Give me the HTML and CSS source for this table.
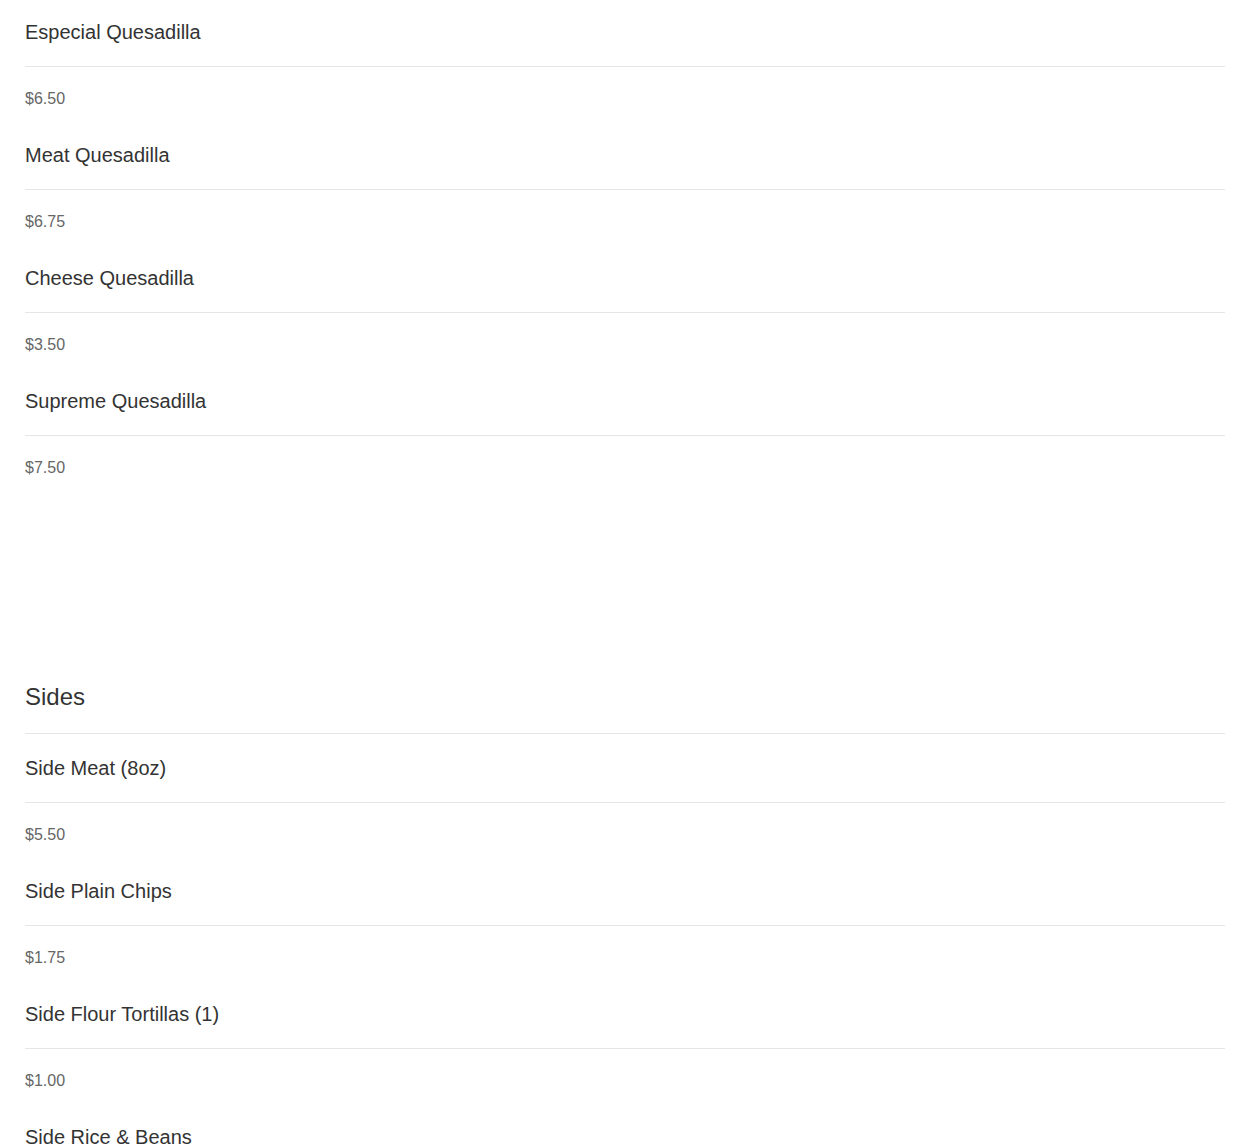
FILE: index.html
```html
<!DOCTYPE html>
<html lang="en">
<head>
<meta charset="utf-8">
<title>Menu</title>
<link rel="stylesheet" href="styles.css">
</head>
<body>
<main class="menu">
  <section class="section">
    <div class="item">
      <h3 class="item-name">Especial Quesadilla</h3>
      <p class="item-price">$6.50</p>
    </div>
    <div class="item">
      <h3 class="item-name">Meat Quesadilla</h3>
      <p class="item-price">$6.75</p>
    </div>
    <div class="item">
      <h3 class="item-name">Cheese Quesadilla</h3>
      <p class="item-price">$3.50</p>
    </div>
    <div class="item">
      <h3 class="item-name">Supreme Quesadilla</h3>
      <p class="item-price">$7.50</p>
    </div>
  </section>
  <section class="section section-spaced">
    <h2 class="section-title">Sides</h2>
    <div class="item">
      <h3 class="item-name">Side Meat (8oz)</h3>
      <p class="item-price">$5.50</p>
    </div>
    <div class="item">
      <h3 class="item-name">Side Plain Chips</h3>
      <p class="item-price">$1.75</p>
    </div>
    <div class="item">
      <h3 class="item-name">Side Flour Tortillas (1)</h3>
      <p class="item-price">$1.00</p>
    </div>
    <div class="item">
      <h3 class="item-name">Side Rice &amp; Beans</h3>
    </div>
  </section>
</main>
</body>
</html>
```

FILE: styles.css
```css
html, body {
  margin: 0;
  padding: 0;
  background: #ffffff;
}

body {
  font-family: "Liberation Sans", Arial, sans-serif;
  color: #333333;
}

.menu {
  padding: 0 25px;
}

.section-spaced {
  margin-top: 190px;
}

.section-title {
  margin: 0 0 2px;
  padding: 0 0 22px;
  font-size: 24px;
  line-height: 29px;
  font-weight: normal;
  color: #333333;
  border-bottom: 1px solid #e6e6e6;
}

.item {
  height: 123px;
}

.item-name {
  margin: 0;
  padding: 20px 0 22px;
  font-size: 20px;
  line-height: 24px;
  font-weight: normal;
  color: #333333;
  border-bottom: 1px solid #e6e6e6;
}

.item-price {
  margin: 0;
  padding-top: 22px;
  font-size: 16px;
  line-height: 19px;
  color: #666666;
}
```
